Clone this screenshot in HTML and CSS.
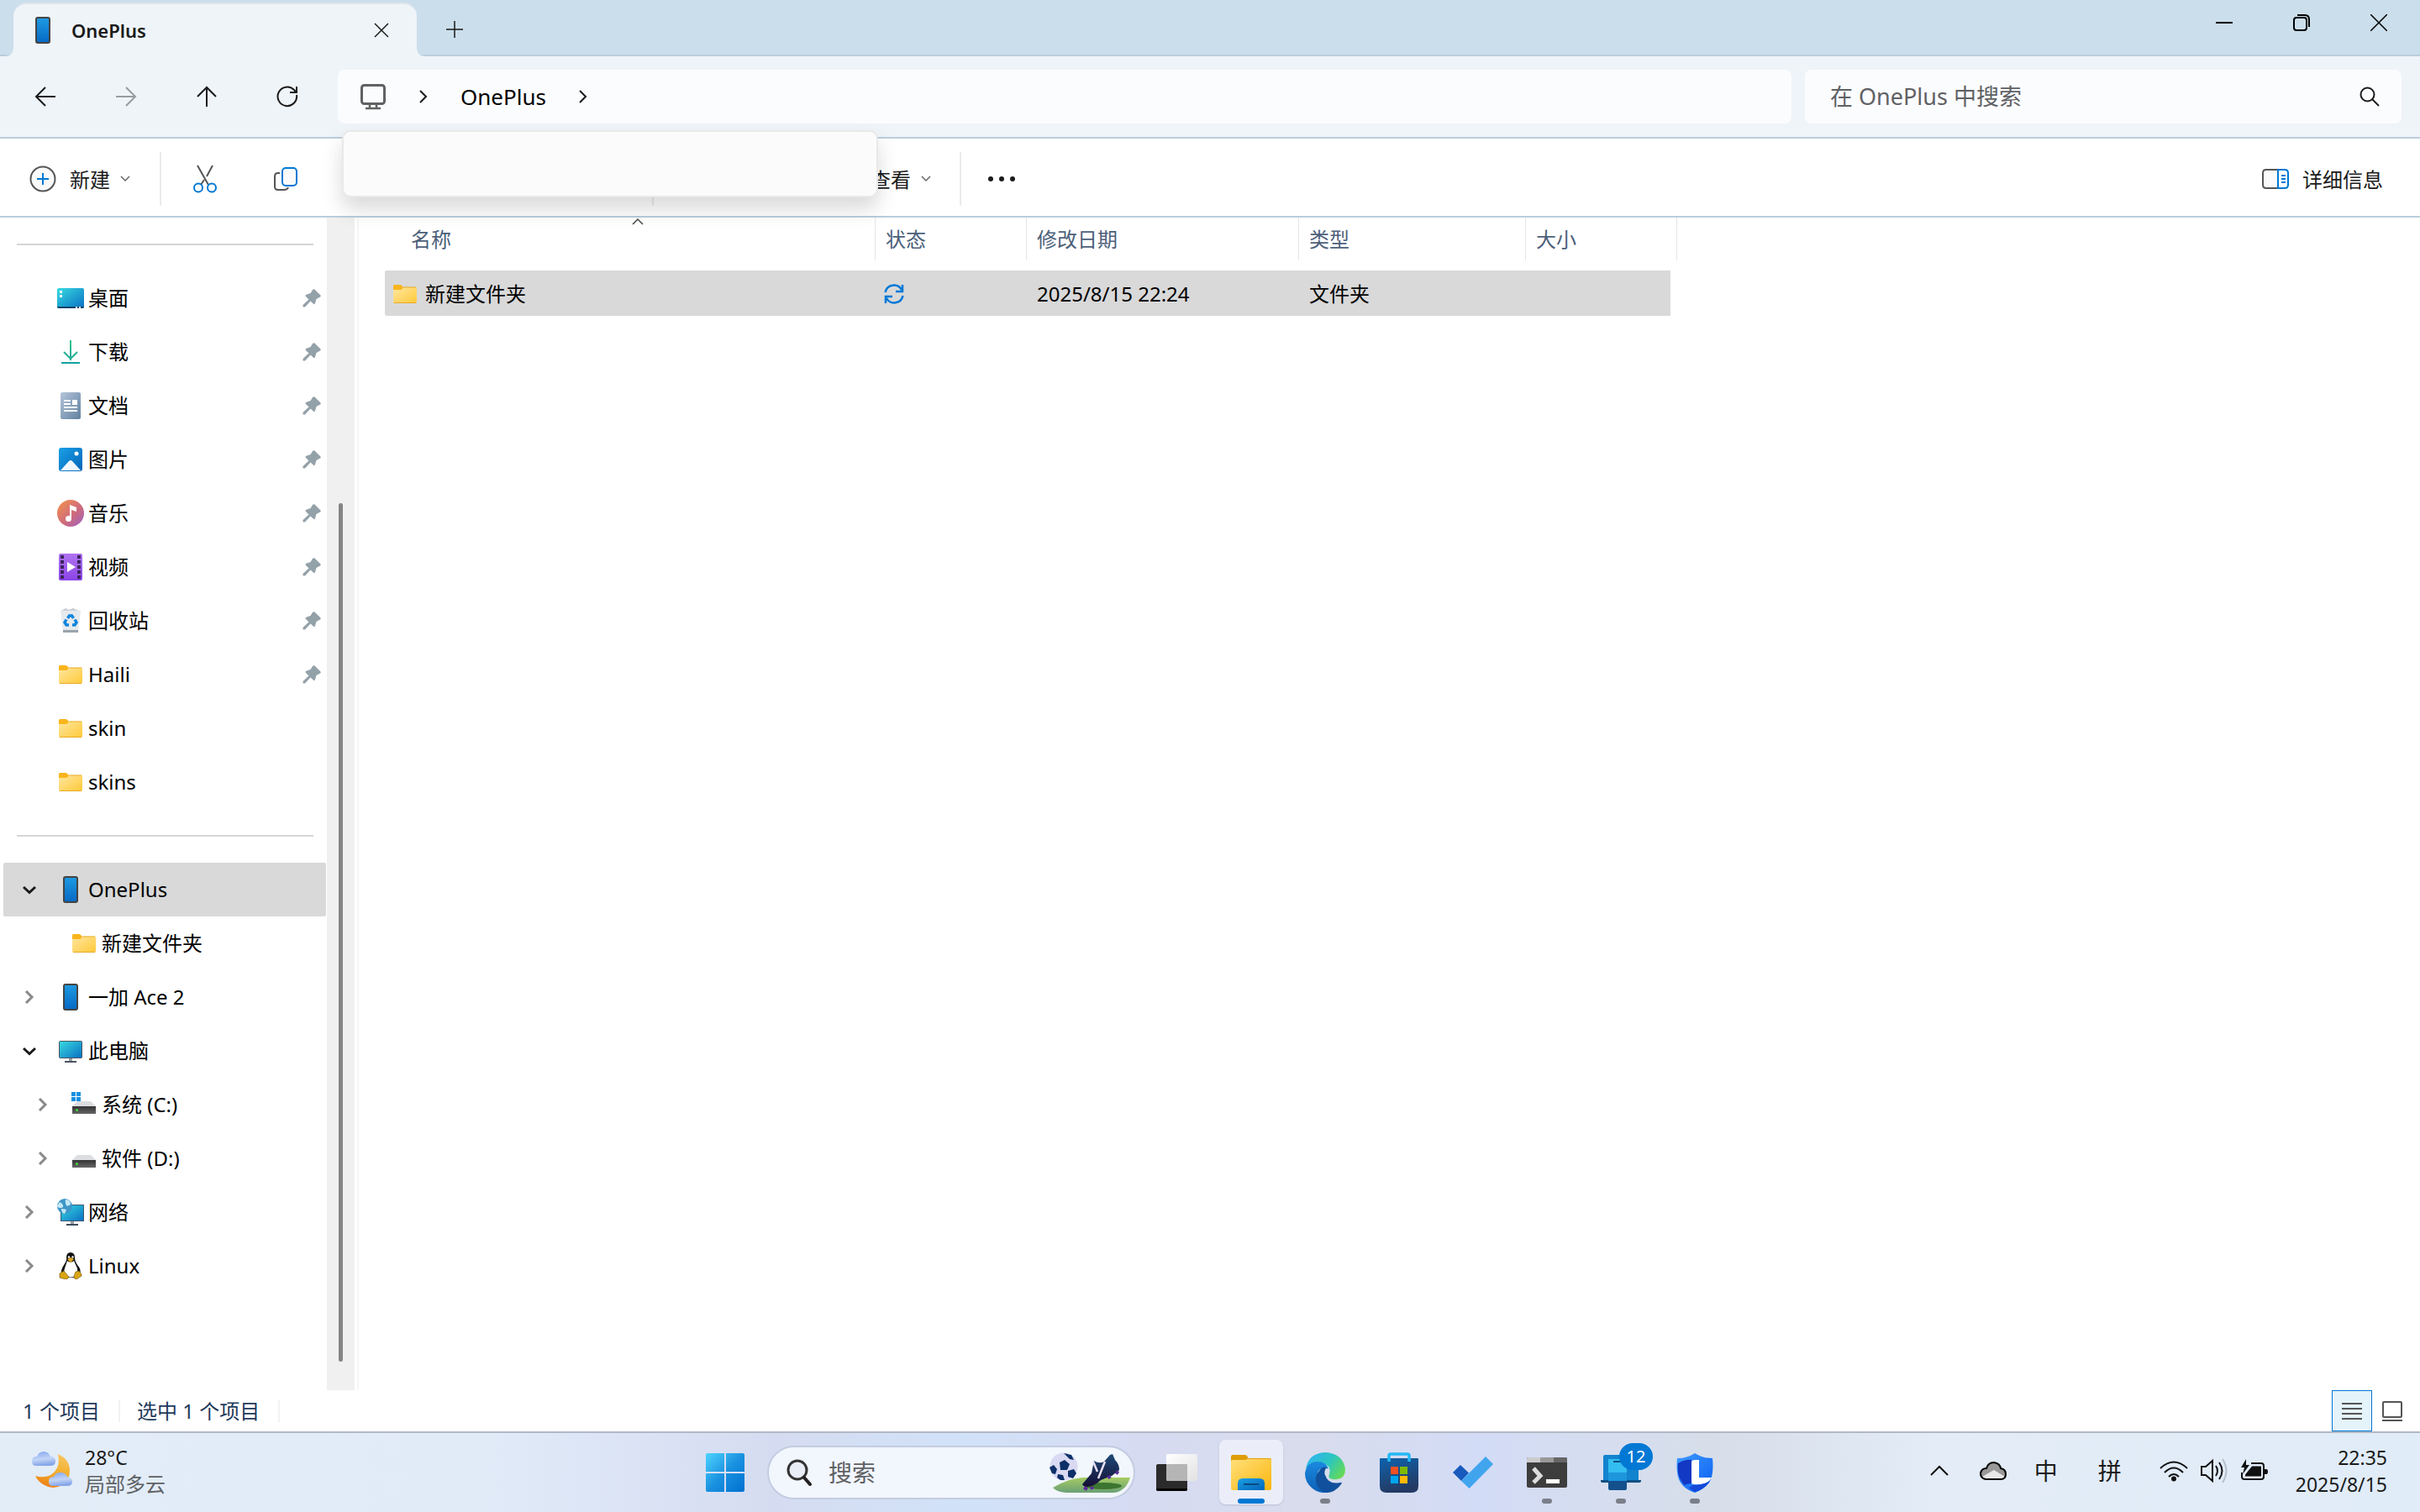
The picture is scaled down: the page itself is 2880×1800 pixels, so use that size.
FILE: index.html
```html
<!DOCTYPE html>
<html lang="zh-CN">
<head>
    <meta charset="UTF-8">
    <meta name="viewport" content="width=device-width, initial-scale=1.0">
    <title>OnePlus</title>
    <link rel="stylesheet" href="styles.css">
</head>
<body>
    <!-- 公用图标 -->
    <svg class="defs" width="0" height="0" aria-hidden="true">
        <defs>
            <linearGradient id="gPhone" x1="0" y1="0" x2="0" y2="1"><stop offset="0" stop-color="#1e9be2"/><stop offset="1" stop-color="#0668c4"/></linearGradient>
            <linearGradient id="gFolder" x1="0" y1="0" x2="1" y2="1"><stop offset="0" stop-color="#ffe7a0"/><stop offset="1" stop-color="#ffc938"/></linearGradient>
            <linearGradient id="gScreen" x1="0" y1="0" x2="1" y2="1"><stop offset="0" stop-color="#38dbe0"/><stop offset="1" stop-color="#0a6fc4"/></linearGradient>
            <linearGradient id="gBlue" x1="0" y1="0" x2="1" y2="1"><stop offset="0" stop-color="#1aa0e6"/><stop offset="1" stop-color="#0465b8"/></linearGradient>
            <linearGradient id="gDown" x1="0" y1="0" x2="0" y2="1"><stop offset="0" stop-color="#3cc58e"/><stop offset="1" stop-color="#12a0a0"/></linearGradient>
            <linearGradient id="gDoc" x1="0" y1="0" x2="1" y2="1"><stop offset="0" stop-color="#b4c5da"/><stop offset="1" stop-color="#61809f"/></linearGradient>
            <linearGradient id="gMusic" x1="0" y1="0" x2="1" y2="1"><stop offset="0.1" stop-color="#f08c52"/><stop offset="0.6" stop-color="#cb6a80"/><stop offset="1" stop-color="#9b62c8"/></linearGradient>
            <linearGradient id="gVideo" x1="0" y1="0" x2="0" y2="1"><stop offset="0" stop-color="#b073f2"/><stop offset="1" stop-color="#8a44e6"/></linearGradient>
            <linearGradient id="gDrive" x1="0" y1="0" x2="0" y2="1"><stop offset="0" stop-color="#333"/><stop offset="1" stop-color="#666"/></linearGradient>
            <linearGradient id="gMoon" x1="0.6" y1="0" x2="0.3" y2="1"><stop offset="0" stop-color="#f7c45e"/><stop offset="0.5" stop-color="#f1ae2c"/><stop offset="1" stop-color="#ee7d14"/></linearGradient>
            <linearGradient id="gCloud" x1="0" y1="0" x2="0.2" y2="1"><stop offset="0" stop-color="#82a8ee"/><stop offset="0.6" stop-color="#c2d4f7"/><stop offset="1" stop-color="#86a6e8"/></linearGradient>
            <linearGradient id="gStart" gradientUnits="userSpaceOnUse" x1="0" y1="0" x2="46" y2="46"><stop offset="0" stop-color="#4fd4ff"/><stop offset="0.5" stop-color="#1a92e0"/><stop offset="1" stop-color="#0070d0"/></linearGradient>
            <linearGradient id="gYellow" x1="0" y1="0" x2="1" y2="1"><stop offset="0" stop-color="#ffe07a"/><stop offset="1" stop-color="#fbb50e"/></linearGradient>
            <linearGradient id="gEdgeTop" x1="0" y1="0.3" x2="1" y2="0.8"><stop offset="0" stop-color="#2fb4ee"/><stop offset="0.5" stop-color="#2cc6bf"/><stop offset="1" stop-color="#6bdc4c"/></linearGradient>
            <linearGradient id="gEdgeLow" x1="0" y1="0" x2="0" y2="1"><stop offset="0" stop-color="#1a8ae0"/><stop offset="1" stop-color="#0d5fb5"/></linearGradient>
            <linearGradient id="gStore" x1="0" y1="0" x2="0.3" y2="1"><stop offset="0" stop-color="#0e62ac"/><stop offset="1" stop-color="#243a63"/></linearGradient>
            <linearGradient id="gShield" x1="0" y1="0" x2="1" y2="1"><stop offset="0" stop-color="#3f9bff"/><stop offset="1" stop-color="#0a5ef0"/></linearGradient>
            <linearGradient id="gGrass" x1="0" y1="0" x2="0" y2="1"><stop offset="0" stop-color="#a6cc62"/><stop offset="1" stop-color="#6aa076"/></linearGradient>
            <linearGradient id="gBoot" x1="0" y1="0" x2="0" y2="1"><stop offset="0" stop-color="#1f4a78"/><stop offset="1" stop-color="#150f35"/></linearGradient>
            <linearGradient id="gWhite" x1="0" y1="0" x2="1" y2="1"><stop offset="0" stop-color="#fff"/><stop offset="1" stop-color="#e2e2e2"/></linearGradient>
        </defs>
        <symbol id="phone" viewBox="0 0 32 32"><rect x="8" y="1" width="16" height="30" rx="2" fill="url(#gPhone)" stroke="#444" stroke-width="2"/></symbol>
        <symbol id="folder" viewBox="0 0 32 32"><path d="M2 6.500q0-1.500 1.500-1.500h6.500q1 0 1.800.8l2 2v4H2z" fill="#f8b51c"/><path d="M2 11h8.500q1 0 1.800-.8l1.600-1.700q.6-.5 1.500-.5H29q1 0 1 1v16q0 2-2 2H4q-2 0-2-2z" fill="url(#gFolder)"/><path d="M3 26.500h26M14 8h15" stroke="#e8a91e" fill="none"/></symbol>
        <symbol id="pin" viewBox="0 0 22 22"><path d="M12 1q1.500-1.500 3 0l6 6q1.500 1.500 0 2.500l-4.500 2.500-1.500 5q-.8 2-2.200.6L9.500 14.500 3 21.500H.5V19L7.500 12.500 4 9q-1.300-1.500.6-2.200l5-1.800z" fill="#93a1a9"/></symbol>
        <symbol id="right" viewBox="0 0 16 16"><path d="M4 1l7 7-7 7" fill="none" stroke="#8a8a8a" stroke-width="3"/></symbol>
        <symbol id="open" viewBox="0 0 16 16"><path d="M1 5l7 6.500L15 5" fill="none" stroke="#191919" stroke-width="3"/></symbol>
        <symbol id="chev" viewBox="0 0 16 16"><path d="M4 1l7 7-7 7" fill="none" stroke="#1b1b1b" stroke-width="2"/></symbol>
        <symbol id="caret" viewBox="0 0 12 8"><path d="M1 1l5 5 5-5" fill="none" stroke="#666" stroke-width="1.500"/></symbol>
        <symbol id="drive" viewBox="0 0 32 32"><path d="M8 12h16l6 6H2z" fill="#dcdde0"/><path d="M2 18h28v9H2z" fill="url(#gDrive)"/><circle cx="7.500" cy="22.500" r="1.500" fill="#3fe03f"/></symbol>
    </svg>

    <!-- 标题栏 -->
    <header class="titlebar">
        <div class="tab">
            <svg class="tab-icon"><use href="#phone"/></svg>
            <span class="tab-title">OnePlus</span>
            <button class="tab-close" aria-label="关闭标签页"><svg width="18" height="18" viewBox="0 0 18 18"><path d="M1 1l16 16M17 1L1 17" stroke="#1b1b1b" stroke-width="1.500"/></svg></button>
        </div>
        <button class="new-tab" aria-label="新标签页"><svg width="20" height="20" viewBox="0 0 20 20"><path d="M10 0v20M0 10h20" stroke="#1b1b1b" stroke-width="1.500"/></svg></button>
        <div class="win-controls">
            <button aria-label="最小化"><svg width="20" height="20" viewBox="0 0 20 20"><path d="M0 10h20" stroke="#000" stroke-width="2"/></svg></button>
            <button aria-label="还原"><svg width="20" height="20" viewBox="0 0 20 20" fill="none" stroke="#000" stroke-width="2"><rect x="1" y="4" width="15" height="15" rx="3"/><path d="M5 1h9q5 0 5 5v9"/></svg></button>
            <button aria-label="关闭"><svg width="20" height="20" viewBox="0 0 20 20"><path d="M0 0l20 20M20 0L0 20" stroke="#000" stroke-width="1.500"/></svg></button>
        </div>
    </header>

    <!-- 导航与地址栏 -->
    <nav class="navbar">
        <div class="nav-buttons">
            <button aria-label="后退"><svg width="26" height="26" viewBox="0 0 26 26"><path d="M13 2L2 13l11 11M2 13h23"/></svg></button>
            <button aria-label="前进" disabled><svg width="26" height="26" viewBox="0 0 26 26"><path d="M13 2l11 11-11 11M24 13H1"/></svg></button>
            <button aria-label="向上"><svg width="26" height="26" viewBox="0 0 26 26"><path d="M2 13L13 2l11 11M13 2v23"/></svg></button>
            <button aria-label="刷新"><svg width="26" height="26" viewBox="0 0 26 26"><path d="M24 11a11.300 11.300 0 1 1-3-6l3 3M24 1v7h-8"/></svg></button>
        </div>
        <div class="address">
            <button class="crumb-root" aria-label="此电脑"><svg width="32" height="32" viewBox="0 0 32 32" fill="none" stroke="#616161" stroke-width="3"><rect x="2.500" y="2.500" width="27" height="22" rx="3"/><path d="M12 25v5M20 25v5M7 30h18" stroke-width="2.500"/></svg></button>
            <svg class="chev"><use href="#chev"/></svg>
            <a class="crumb" href="#">OnePlus</a>
            <svg class="chev"><use href="#chev"/></svg>
        </div>
        <label class="search">
            <input type="search" placeholder="在 OnePlus 中搜索" aria-label="搜索">
            <svg width="24" height="24" viewBox="0 0 24 24" fill="none" stroke="#1b1b1b" stroke-width="2"><circle cx="9.500" cy="9.500" r="8"/><path d="M15 15l8 8"/></svg>
        </label>
    </nav>

    <!-- 命令栏 -->
    <div class="toolbar">
        <button class="cmd cmd-new">
            <svg width="32" height="32" viewBox="0 0 32 32" fill="none"><circle cx="16" cy="16" r="14.500" fill="#fafafa" stroke="#555" stroke-width="2"/><path d="M16 9v14M9 16h14" stroke="#0078d4" stroke-width="2"/></svg>
            <span>新建</span>
            <svg class="caret"><use href="#caret"/></svg>
        </button>
        <div class="edit-group">
            <button class="cmd-icon" aria-label="剪切"><svg width="32" height="34" viewBox="0 0 32 34" fill="none" stroke-width="2"><path d="M7 1l13 23M25 1l-7 13M15 18l-4 6" stroke="#555"/><circle cx="8" cy="27.500" r="5" stroke="#0078d4"/><circle cx="24" cy="27.500" r="5" stroke="#0078d4"/></svg></button>
            <button class="cmd-icon" aria-label="复制"><svg width="32" height="32" viewBox="0 0 32 32" fill="none" stroke-width="2"><path d="M9 9H7q-4 0-4 4v12q0 4 4 4h7q4 0 5-3" stroke="#555"/><rect x="12" y="3" width="17" height="21" rx="4" fill="#fafafa" stroke="#0078d4"/></svg></button>
        </div>
        <button class="cmd cmd-view">
            <span>查看</span>
            <svg class="caret"><use href="#caret"/></svg>
        </button>
        <button class="cmd-icon" aria-label="查看更多"><svg width="34" height="8" viewBox="0 0 34 8" fill="#1b1b1b"><circle cx="4" cy="4" r="3"/><circle cx="17" cy="4" r="3"/><circle cx="30" cy="4" r="3"/></svg></button>
        <button class="cmd cmd-detail">
            <svg width="34" height="26" viewBox="0 0 34 26" fill="none" stroke-width="2"><path d="M20 2H6Q2 2 2 6v14q0 4 4 4h14" fill="#fafafa" stroke="#555"/><path d="M20 2h8q4 0 4 4v14q0 4-4 4h-8zM24 9h5M24 13h5M24 17h5" stroke="#0078d4"/></svg>
            <span>详细信息</span>
        </button>
        <div class="popup"></div>
    </div>

    <!-- 内容区 -->
    <main class="content">
        <aside class="sidebar">
            <hr>
            <a href="#"><svg viewBox="0 0 32 32"><rect y="4" width="32" height="24" rx="2" fill="url(#gScreen)"/><path d="M0 26h32q0 2-2 2H2q-2 0-2-2z" fill="#0a4468"/><path d="M3 7h3v3H3zM3 12h3v3H3zM22 26h2v2h-2zM26 26h2v2h-2z" fill="#fff"/></svg>桌面<svg class="pin"><use href="#pin"/></svg></a>
            <a href="#"><svg viewBox="0 0 32 32"><path d="M15 2h2v24h-2zM5 28h22v2H5z" fill="url(#gDown)"/><path d="M8 16l8 8 8-8" fill="none" stroke="#24b295" stroke-width="2"/></svg>下载<svg class="pin"><use href="#pin"/></svg></a>
            <a href="#"><svg viewBox="0 0 32 32"><rect x="4" width="24" height="32" rx="2" fill="url(#gDoc)"/><path d="M8 9h8v2H8zM8 13h8v2H8zM18 9h6v6h-6zM8 17h16v2H8zM8 21h16v2H8z" fill="#fff"/></svg>文档<svg class="pin"><use href="#pin"/></svg></a>
            <a href="#"><svg viewBox="0 0 32 32"><rect x="2" y="2" width="28" height="28" rx="3" fill="url(#gBlue)"/><path d="M4 29l10-11q2-2 4 0l10 11z" fill="#f1f8ff"/><circle cx="23" cy="9" r="2.500" fill="#fff"/></svg>图片<svg class="pin"><use href="#pin"/></svg></a>
            <a href="#"><svg viewBox="0 0 32 32"><circle cx="16" cy="16" r="16" fill="url(#gMusic)"/><circle cx="13.500" cy="22.500" r="3.500" fill="#fff"/><path d="M15 6l8 3v5l-6-2v10.500h-2z" fill="#fff"/></svg>音乐<svg class="pin"><use href="#pin"/></svg></a>
            <a href="#"><svg viewBox="0 0 32 32"><rect x="2" width="28" height="32" rx="2" fill="url(#gVideo)"/><path d="M6 2v29M26 2v29" stroke="#3c2560" stroke-width="4" stroke-dasharray="4 2"/><path d="M12 10l10 6-10 6z" fill="#fff"/></svg>视频<svg class="pin"><use href="#pin"/></svg></a>
            <a href="#"><svg viewBox="0 0 32 32"><path d="M4 4h24l-3 26H7z" fill="#e6eaee"/><path d="M7 27h18v3H7z" fill="#9aa3ab"/><path d="M5 4l5-3 4 2 5-2 4 2 4 1z" fill="#c9ced3"/><path d="M12.500 13l2-3h3l2 3M21 14.500l2 3.500-2 3h-3M14 21h-3l-2-3 2-3.500" fill="none" stroke="#0f86dc" stroke-width="3.500"/></svg>回收站<svg class="pin"><use href="#pin"/></svg></a>
            <a href="#"><svg><use href="#folder"/></svg>Haili<svg class="pin"><use href="#pin"/></svg></a>
            <a href="#"><svg><use href="#folder"/></svg>skin</a>
            <a href="#"><svg><use href="#folder"/></svg>skins</a>
            <hr>
            <a href="#" class="node selected"><svg class="twist"><use href="#open"/></svg><svg><use href="#phone"/></svg>OnePlus</a>
            <a href="#" class="child"><svg><use href="#folder"/></svg>新建文件夹</a>
            <a href="#" class="node"><svg class="twist"><use href="#right"/></svg><svg><use href="#phone"/></svg>一加 Ace 2</a>
            <a href="#" class="node"><svg class="twist"><use href="#open"/></svg><svg viewBox="0 0 32 32"><rect x="2.500" y="4.500" width="27" height="20" rx="1" fill="url(#gScreen)" stroke="#4a5560"/><path d="M14 25h4v3h-4z" fill="#9aa0a6"/><path d="M9 28h14v2H9z" fill="#4a5560"/></svg>此电脑</a>
            <a href="#" class="node child"><svg class="twist"><use href="#right"/></svg><svg viewBox="0 0 32 32"><use href="#drive"/><path d="M1 1h5v5H1zM7 1h5v5H7zM1 7h5v5H1zM7 7h5v5H7z" fill="#1590e0"/></svg>系统 (C:)</a>
            <a href="#" class="node child"><svg class="twist"><use href="#right"/></svg><svg><use href="#drive"/></svg>软件 (D:)</a>
            <a href="#" class="node"><svg class="twist"><use href="#right"/></svg><svg viewBox="0 0 32 32"><rect x="4.500" y="7.500" width="27" height="19" fill="url(#gScreen)" stroke="#3c5a74"/><path d="M16 27h4v3h-4z" fill="#9aa0a6"/><path d="M11 30h14v2H11z" fill="#3f4d5a"/><circle cx="9" cy="9" r="9" fill="#3f96c8"/><path d="M3 4q3 1 4 4t-3 3-4-3zM10 1q6 0 6 6l-4 2q-3-3-2-8zM5 12q3 0 6 1l-2 5q-4-1-4-6z" fill="#c5e8f5"/></svg>网络</a>
            <a href="#" class="node"><svg class="twist"><use href="#right"/></svg><svg viewBox="0 0 32 32"><path d="M11 6q0-6 5-6t5 6q0 5 4 10t2 10l-4 4H9l-4-4q-1-5 3-11t3-9z" fill="#111"/><path d="M12 10q4 3 8 0l4 9q1 5-2 9-6 3-12 0-3-4-1-9z" fill="#fff"/><path d="M12 8l4-2 4 2-4 4z" fill="#e0a81c"/><circle cx="14" cy="5.500" r="1.200" fill="#fff"/><circle cx="18.500" cy="5.500" r="1.200" fill="#fff"/><path d="M3 25l5-3 6 7q-1 3-4 3l-7-2zM29 26l-3-4-4 1-2 5q0 4 3 4l6-4z" fill="#d9a514" stroke="#6b5212" stroke-width=".6"/></svg>Linux</a>
        </aside>
        <div class="scrollbar"><div class="thumb"></div></div>
        <section class="files">
            <table>
                <colgroup><col class="c-name"><col class="c-state"><col class="c-date"><col class="c-type"><col class="c-size"></colgroup>
                <thead>
                    <tr>
                        <th class="name"><div>名称<svg class="sort" width="14" height="9" viewBox="0 0 14 9"><path d="M1 8l6-6 6 6" fill="none" stroke="#444" stroke-width="1.500"/></svg></div></th>
                        <th><div>状态</div></th>
                        <th><div>修改日期</div></th>
                        <th><div>类型</div></th>
                        <th><div>大小</div></th>
                    </tr>
                </thead>
                <tbody>
                    <tr>
                        <td class="name"><div><svg><use href="#folder"/></svg>新建文件夹</div></td>
                        <td class="state"><svg width="24" height="24" viewBox="0 0 24 24" fill="none" stroke="#0078d7" stroke-width="2.500"><path d="M1.500 10A10.500 10.500 0 0 1 21 7M22 1v8h-8M22.500 14A10.500 10.500 0 0 1 3 17M2 23v-8h8"/></svg></td>
                        <td>2025/8/15 22:24</td>
                        <td>文件夹</td>
                        <td></td>
                    </tr>
                </tbody>
            </table>
        </section>
    </main>

    <!-- 状态栏 -->
    <footer class="statusbar">
        <span>1 个项目</span>
        <span>选中 1 个项目</span>
        <div class="views">
            <button class="active" aria-label="详细信息视图"><svg width="24" height="24" viewBox="0 0 24 24"><path d="M0 3h24M0 9h24M0 15h24M0 21h24" stroke="#555" stroke-width="2"/></svg></button>
            <button aria-label="大缩略图视图"><svg width="24" height="26" viewBox="0 0 24 26" fill="none" stroke="#555" stroke-width="2"><rect x="1" y="2" width="22" height="18" rx="1"/><path d="M0 24h24"/></svg></button>
        </div>
    </footer>

    <!-- 任务栏 -->
    <div class="taskbar">
        <button class="weather">
            <svg width="50" height="48" viewBox="0 0 50 48"><path d="M32 4q14 6 14 20 0 11-9 17-11 6-21 0Q8 37 5 30q15 4 23-5 7-8 4-21z" fill="url(#gMoon)"/><path d="M6 18q-5 0-5-5.500T7 7q2-6 8-6t8 6q6 0 6 5.500T23 18z" fill="url(#gCloud)"/><path d="M26 42q-5 0-5-5.500t6-5.500q2-5 8-5t8 5q6 1 6 6t-6 5z" fill="url(#gCloud)"/></svg>
            <span class="weather-text"><span>28°C</span><span class="muted">局部多云</span></span>
        </button>
        <div class="apps">
            <button class="app" aria-label="开始"><svg viewBox="0 0 46 46" width="46" height="46"><path d="M2 0h20v22H0V2q0-2 2-2zM24 0h20q2 0 2 2v20H24zM0 24h22v22H2q-2 0-2-2zM24 24h22v20q0 2-2 2H24z" fill="url(#gStart)"/></svg></button>
            <label class="task-search">
                <svg width="30" height="32" viewBox="0 0 30 32" fill="none"><circle cx="13" cy="13" r="11" fill="#e9edf6" stroke="#333" stroke-width="3"/><path d="M21 22l7 8" stroke="#222" stroke-width="4" stroke-linecap="round"/></svg>
                <input type="text" placeholder="搜索" aria-label="任务栏搜索">
                <svg width="98" height="48" viewBox="0 0 98 48"><path d="M4 42q22-14 50-12h42q-3 11-12 16-4 2-8 2H20q-12-1-16-6z" fill="url(#gGrass)"/><ellipse cx="64" cy="40" rx="22" ry="4" fill="#3c7530"/><circle cx="17" cy="17" r="16.500" fill="#d9d9f3"/><path d="M12 12l6-3 6 5-3 7h-8zM17 1l9 2 3 6-5-1zM0 18l5-3 4 5-2 6-4-1zM22 22l7-2 3 5-4 6-6-2zM10 26l6 1 2 6h-5l-4-3z" fill="#0d3068"/><path d="M39 38l11-13 3-15q6 4 12 1l7-8 3-1 3 7q5 5 5 12l-9 7-13 5q-7 7-16 8-5 0-6-3z" fill="url(#gBoot)"/><path d="M52 11l5 12M66 11l-8 20" stroke="#e9e0f2" stroke-width="2.500"/><path d="M41 42l4 2M50 41l1 3M70 28l2 3M79 23l3 2" stroke="#5b2b9a" stroke-width="4"/></svg>
            </label>
            <button class="app" aria-label="任务视图"><svg width="50" height="46" viewBox="0 0 50 46"><rect y="13" width="37" height="32" rx="2" fill="#2b2b2b"/><path d="M0 42h37v1q0 2-2 2H2q-2 0-2-2z" fill="#050505"/><rect x="12" y="1" width="37" height="32" rx="2" fill="url(#gWhite)"/><path d="M12 13h25v20H14q-2 0-2-2z" fill="#b5b5b5"/></svg></button>
            <button class="app current" aria-label="文件资源管理器"><svg width="48" height="48" viewBox="0 0 48 48"><path d="M0 5q0-2 2-2h14q4 0 4 4h26q2 0 2 2v6H0z" fill="#e09d05"/><path d="M0 11q0-2 2-2h14q2 0 3-1h27q2 0 2 2v33q0 2-2 2H2q-2 0-2-2z" fill="url(#gYellow)"/><path d="M8 45V37q0-6 6-6h20q6 0 6 6v8z" fill="url(#gBlue)"/><path d="M15 38h18" stroke="#0b4a80" stroke-width="2"/></svg></button>
            <button class="app running" aria-label="Edge"><svg width="48" height="48" viewBox="0 0 48 48"><path d="M1 20Q4 1 24 0q21 1 24 20 0 11-10 12-12 1-9-6 3-11-9-13Q8 11 1 20z" fill="url(#gEdgeTop)"/><path d="M0 25Q2 12 14 11q12 0 14 9-8-5-13 4-3 15 11 20 4 3 1 4-10 1-18-5Q0 36 0 25z" fill="url(#gEdgeLow)"/><path d="M17 22q3-6 9-4-4 4-2 9 4 12 18 9 3-1 1 2-7 10-18 10-13-5-12-17 0-5 4-9z" fill="#10509c"/></svg></button>
            <button class="app" aria-label="Microsoft Store"><svg width="48" height="48" viewBox="0 0 48 48"><path d="M1 8q0-1 1-1h44q1 0 1 1v32q0 8-8 8H9q-8 0-8-8z" fill="url(#gStore)"/><path d="M12 11V4q0-2 2-2h20q2 0 2 2v7" fill="none" stroke="#22b8f5" stroke-width="3.500"/><path d="M14 17h9v9h-9z" fill="#f25022"/><path d="M25 17h9v9h-9z" fill="#7fba00"/><path d="M14 28h9v9h-9z" fill="#00a4ef"/><path d="M25 28h9v9h-9z" fill="#ffb900"/></svg></button>
            <button class="app" aria-label="待办"><svg width="48" height="48" viewBox="0 0 48 48"><path d="M0 24l9-9 10 9.500-9 9.500z" fill="#185abd"/><path d="M10 34L39 5l9 9-28.500 29z" fill="#41a5ee"/></svg></button>
            <button class="app running" aria-label="终端"><svg width="48" height="48" viewBox="0 0 48 48"><rect y="6" width="48" height="36" rx="2" fill="#3d3d3d"/><path d="M2 6h14v6H0V8q0-2 2-2z" fill="#ccc"/><path d="M16 6h16v6H16z" fill="#999"/><path d="M32 6h14q2 0 2 2v4H32z" fill="#666"/><path d="M8 19l8 9-8 8" fill="none" stroke="#ddd" stroke-width="5"/><path d="M23 32h16v5H23z" fill="#fff"/></svg></button>
            <button class="app running" aria-label="手机连接"><svg width="48" height="48" viewBox="0 0 48 48"><path d="M3 5q0-2 2-2h38q2 0 2 2v29H3z" fill="#1283cf"/><path d="M0 33h48v1q0 2-3 2H3q-3 0-3-2z" fill="#0c4f84"/><path d="M9 8h22v34q0 3-2 3H11q-2 0-2-3z" fill="#33bdf0"/><path d="M9 24h22v10H9z" fill="#1d96dc"/><path d="M9 34h22v8q0 3-2 3H11q-2 0-2-3z" fill="#14508c"/><path d="M15 11h9" stroke="#0c4f84" stroke-width="2"/></svg><span class="badge">12</span></button>
            <button class="app running" aria-label="联想电脑管家"><svg width="48" height="48" viewBox="0 0 48 48"><path d="M24 1q9 6 21 6 2 20-4 29-6 8-17 12Q12 44 7 36 1 27 3 7q12 0 21-6z" fill="url(#gShield)"/><path d="M4 13q9-5 16-4v28q-5 0-8 2Q2 30 4 13z" fill="#1238c4"/><path d="M20 12q0-3 4-3h5v21h15q-5 10-22 8-2 0-2-3z" fill="#fff"/><path d="M22 39q12 0 20-5-6 10-18 13-4-2-7-5z" fill="#1549d8"/></svg></button>
        </div>
        <div class="tray">
            <button class="tray-btn more" aria-label="显示隐藏的图标"><svg width="22" height="14" viewBox="0 0 22 14"><path d="M1 12L11 2l10 10" fill="none" stroke="#111" stroke-width="2"/></svg></button>
            <button class="tray-btn cloud" aria-label="OneDrive"><svg width="34" height="24" viewBox="0 0 34 24"><path d="M8 22q-6-1-6-7 1-6 7-6 2-7 9-7 7 1 8 7 6 1 6 7t-6 6z" fill="#999" /><path d="M4 19l14-8 13 8-4 3H8z" fill="#e8e8e8"/><path d="M8 22q-6-1-6-7 1-6 7-6 2-7 9-7 7 1 8 7 6 1 6 7t-6 6z" fill="none" stroke="#000" stroke-width="2"/></svg></button>
            <button class="tray-btn ime">中</button>
            <button class="tray-btn ime">拼</button>
            <button class="quick" aria-label="网络、音量和电池">
                <svg width="34" height="26" viewBox="0 0 34 26" fill="none" stroke="#111" stroke-width="2"><path d="M1 10q16-15 32 0M6 15q11-11 22 0M11 20q6-6 12 0"/><circle cx="17" cy="22.500" r="2" fill="#111"/></svg>
                <svg width="34" height="30" viewBox="0 0 34 30" fill="none" stroke="#111" stroke-width="2"><path d="M2 10h5l8-7v24l-8-7H2zM19 9q4 6 0 12M23 5q7 10 0 20"/><path d="M27 1q9 14 0 28" stroke="#b5c0cc"/></svg>
                <svg width="34" height="28" viewBox="0 0 34 28"><path d="M13 5h12q3 0 3 3v13q0 3-3 3H5q-3 0-3-3v-5" fill="none" stroke="#111" stroke-width="2"/><path d="M14 8.500h11v12H6v-2z" fill="#111"/><path d="M29 12h2q2 0 2 3t-2 3h-2zM7 0L1 10h4L3 18 11 7H7z" fill="#111"/></svg>
            </button>
            <button class="clock"><span>22:35</span><span>2025/8/15</span></button>
        </div>
    </div>
</body>
</html>
```
FILE: styles.css
```css
* {
    box-sizing: border-box;
}
body {
    margin: 0;
    min-height: 100vh;
    display: flex;
    flex-direction: column;
    background: #fff;
    color: #000;
    font-family: "Noto Sans", "Noto Sans CJK SC", sans-serif;
    font-size: 24px;
    line-height: 32px;
}
button {
    display: flex;
    align-items: center;
    justify-content: center;
    padding: 0;
    border: 0;
    background: none;
    color: inherit;
    font: inherit;
}
input {
    min-width: 0;
    flex: 1;
    padding: 0;
    border: 0;
    outline: 0;
    background: none;
    font: inherit;
}
input::placeholder {
    color: #5f6164;
    opacity: 1;
}
a {
    color: inherit;
    text-decoration: none;
}
svg {
    flex: none;
}
.defs {
    position: absolute;
}

/* 标题栏 */
.titlebar {
    height: 67px;
    display: flex;
    align-items: flex-start;
    padding-left: 16px;
    background: #cbdeeb;
    border-bottom: 2px solid #bacddc;
}
.tab {
    position: relative;
    width: 480px;
    height: 64px;
    margin-top: 3px;
    padding: 0 24px 0 19px;
    display: flex;
    align-items: center;
    background: #eff4f9;
    border-top: 2px solid #dfe6ec;
    border-radius: 16px 16px 0 0;
}
/* 标签底部的圆角过渡 */
.tab::before,
.tab::after {
    content: "";
    position: absolute;
    bottom: 0;
    width: 8px;
    height: 8px;
}
.tab::before {
    left: -8px;
    background: radial-gradient(circle at 0 0, transparent 7px, #eff4f9 8px);
}
.tab::after {
    right: -8px;
    background: radial-gradient(circle at 100% 0, transparent 7px, #eff4f9 8px);
}
.tab-icon {
    width: 32px;
    height: 32px;
    margin-right: 18px;
}
.tab-title {
    flex: 1;
    color: #1b1b1b;
    font-size: 22px;
    font-weight: 600;
}
.tab-close {
    width: 36px;
    height: 36px;
}
.new-tab {
    width: 90px;
    height: 64px;
    margin-top: 3px;
}
.win-controls {
    display: flex;
    margin-left: auto;
    padding-right: 3px;
}
.win-controls button {
    width: 92px;
    height: 54px;
}

/* 导航栏 */
.navbar {
    height: 98px;
    display: flex;
    align-items: center;
    padding-right: 22px;
    background: #eff4f9;
    border-bottom: 2px solid #bacddc;
}
.nav-buttons {
    width: 390px;
    margin-right: 12px;
    display: flex;
    padding-left: 6px;
}
.nav-buttons button {
    width: 96px;
    height: 64px;
}
.nav-buttons svg {
    fill: none;
    stroke: #1b1b1b;
    stroke-width: 2;
}
.nav-buttons button:disabled {
    opacity: 0.4;
}
.address,
.search {
    height: 64px;
    display: flex;
    align-items: center;
    background: #fbfcfe;
    border-radius: 8px;
}
.address {
    flex: 1;
    margin-right: 16px;
    padding-left: 26px;
    font-size: 26px;
}
.chev {
    width: 16px;
    height: 16px;
    margin: 0 36px;
}
.search {
    width: 710px;
    padding: 0 26px 0 30px;
    font-size: 27px;
}

/* 命令栏 */
.toolbar {
    position: relative;
    height: 94px;
    display: flex;
    align-items: center;
    padding-top: 4px;
    color: #1b1b1b;
    border-bottom: 2px solid #bacddc;
}
.cmd {
    height: 64px;
}
.cmd span {
    padding-top: 2px;
}
.caret {
    width: 12px;
    height: 8px;
}
.cmd-new {
    width: 192px;
    border-right: 2px solid #ebebeb;
}
.cmd-new span {
    margin: 0 12px 0 16px;
}
.cmd-icon {
    width: 96px;
    height: 64px;
}
.edit-group {
    width: 586px;
    height: 64px;
    padding-left: 4px;
    display: flex;
    border-right: 2px solid #ebebeb;
}
.cmd-view {
    width: 366px;
    justify-content: flex-end;
    gap: 12px;
    padding-right: 34px;
    border-right: 2px solid #ebebeb;
}
.cmd-detail {
    margin-left: auto;
    margin-right: 44px;
    gap: 15px;
}
.popup {
    position: absolute;
    left: 407px;
    top: -10px;
    width: 638px;
    height: 80px;
    background: #fbfbfb;
    border: 2px solid #e9e9e9;
    border-radius: 10px;
    box-shadow: 0 14px 24px rgba(0, 0, 0, 0.15);
}

/* 左侧导航 */
.content {
    flex: 1;
    display: flex;
}
.sidebar {
    width: 389px;
}
.sidebar hr {
    height: 2px;
    margin: 31px 16px 31px 20px;
    border: 0;
    background: #d6d6d6;
}
.sidebar a {
    height: 64px;
    margin: 0 1px 0 4px;
    padding: 0 6px 0 64px;
    display: flex;
    align-items: center;
    gap: 5px;
    white-space: pre;
    border-radius: 2px;
}
.sidebar svg {
    width: 32px;
    height: 32px;
}
.sidebar .pin {
    width: 22px;
    height: 22px;
    margin-left: auto;
}
.sidebar .child {
    padding-left: 80px;
}
.sidebar .node {
    padding-left: 23px;
}
.sidebar .node.child {
    padding-left: 39px;
}
.sidebar .twist {
    width: 16px;
    height: 16px;
    margin-right: 20px;
}
.sidebar .selected {
    background: #d9d9d9;
}
.scrollbar {
    width: 33px;
    padding: 340px 14px 34px;
    display: flex;
    background: #f0f0f0;
}
.thumb {
    flex: 1;
    border-radius: 3px;
    background: #858585;
}

/* 文件列表 */
.files {
    flex: 1;
    margin-left: 3px;
    padding-left: 31px;
    border-left: 2px solid #f5f5f5;
}
table {
    table-layout: fixed;
    width: 1538px;
    border-spacing: 0;
}
.c-name {
    width: 584px;
}
.c-state {
    width: 180px;
}
.c-date {
    width: 324px;
}
.c-type {
    width: 270px;
}
.c-size {
    width: 180px;
}
th {
    padding: 0 0 12px;
    color: #4c607a;
    font-weight: 400;
    text-align: left;
}
th div {
    position: relative;
    height: 51px;
    padding: 10px 0 0 12px;
    border-right: 1px solid #e5e5e5;
}
th.name div {
    padding-left: 31px;
}
.sort {
    position: absolute;
    top: 0;
    left: 294px;
}
td {
    height: 54px;
    padding: 2px 0 0 12px;
    background: #d9d9d9;
}
td.name {
    padding-left: 8px;
    border-radius: 2px 0 0 2px;
}
td.name div {
    display: flex;
    align-items: center;
    gap: 8px;
}
td.name svg {
    width: 32px;
    height: 32px;
}
td.state svg {
    display: block;
    margin-left: -2px;
}
td:last-child {
    border-right: 8px solid #fff;
}

/* 状态栏 */
.statusbar {
    height: 49px;
    display: flex;
    align-items: center;
    padding-left: 27px;
    color: #1e395b;
}
.statusbar span {
    height: 26px;
    line-height: 26px;
    margin-right: 20px;
    padding-right: 22px;
    border-right: 2px solid #f2f2f2;
}
.views {
    display: flex;
    margin-left: auto;
    padding-right: 9px;
}
.views button {
    width: 48px;
    height: 49px;
}
.views .active {
    background: #e5f3fb;
    border: 1px solid #0078d7;
}

/* 任务栏 */
.taskbar {
    height: 96px;
    display: grid;
    grid-template-columns: 1fr auto 1fr;
    color: #1b1b1b;
    border-top: 2px solid #b2b8c4;
    background: linear-gradient(90deg, #e3edf8 0, #e1ebf8 20%, #d5dcf1 32%, #d1e2f8 40%, #d6dbf2 47%, #d8dcec 54%, #d3dcf6 61%, #d7dee9 71%, #e3ecf7 80%, #e0ecf8 100%);
}
.weather {
    justify-self: start;
    padding: 0 0 5px 37px;
    gap: 14px;
}
.weather-text,
.clock {
    display: flex;
    flex-direction: column;
    font-size: 23px;
}
.weather-text {
    align-items: flex-start;
}
.muted {
    color: #5f6164;
    font-size: 24px;
}
.apps {
    display: flex;
    align-items: center;
}
.app {
    position: relative;
    width: 88px;
    height: 94px;
}
.current::before {
    content: "";
    position: absolute;
    z-index: -1;
    inset: 8px 6px 9px;
    border-radius: 8px;
    background: #ebeef8;
    box-shadow: 0 1px 2px #b9bfd3;
}
.current {
    z-index: 0;
}
.running::after,
.current::after {
    content: "";
    position: absolute;
    bottom: 10px;
    width: 12px;
    height: 6px;
    border-radius: 3px;
    background: #7a7f89;
}
.current::after {
    width: 32px;
    background: #0078d4;
}
.badge {
    position: absolute;
    top: 12px;
    right: 6px;
    min-width: 40px;
    height: 32px;
    border-radius: 16px;
    background: #0078d4;
    color: #fff;
    font-size: 20px;
    text-align: center;
}
.task-search {
    width: 438px;
    height: 64px;
    margin: 0 6px;
    padding: 0 2px 0 21px;
    display: flex;
    align-items: center;
    gap: 20px;
    font-size: 28px;
    background: #f2f6fd;
    border: 2px solid #c4cce0;
    border-radius: 32px;
}
.tray {
    justify-self: end;
    display: flex;
    padding: 0 39px 4px 0;
}
.tray-btn {
    width: 76px;
}
.more {
    width: 78px;
}
.cloud {
    width: 50px;
}
.ime {
    font-size: 28px;
}
.quick {
    gap: 14px;
    padding: 0 32px 0 21px;
}
.clock {
    align-items: flex-end;
}
```
